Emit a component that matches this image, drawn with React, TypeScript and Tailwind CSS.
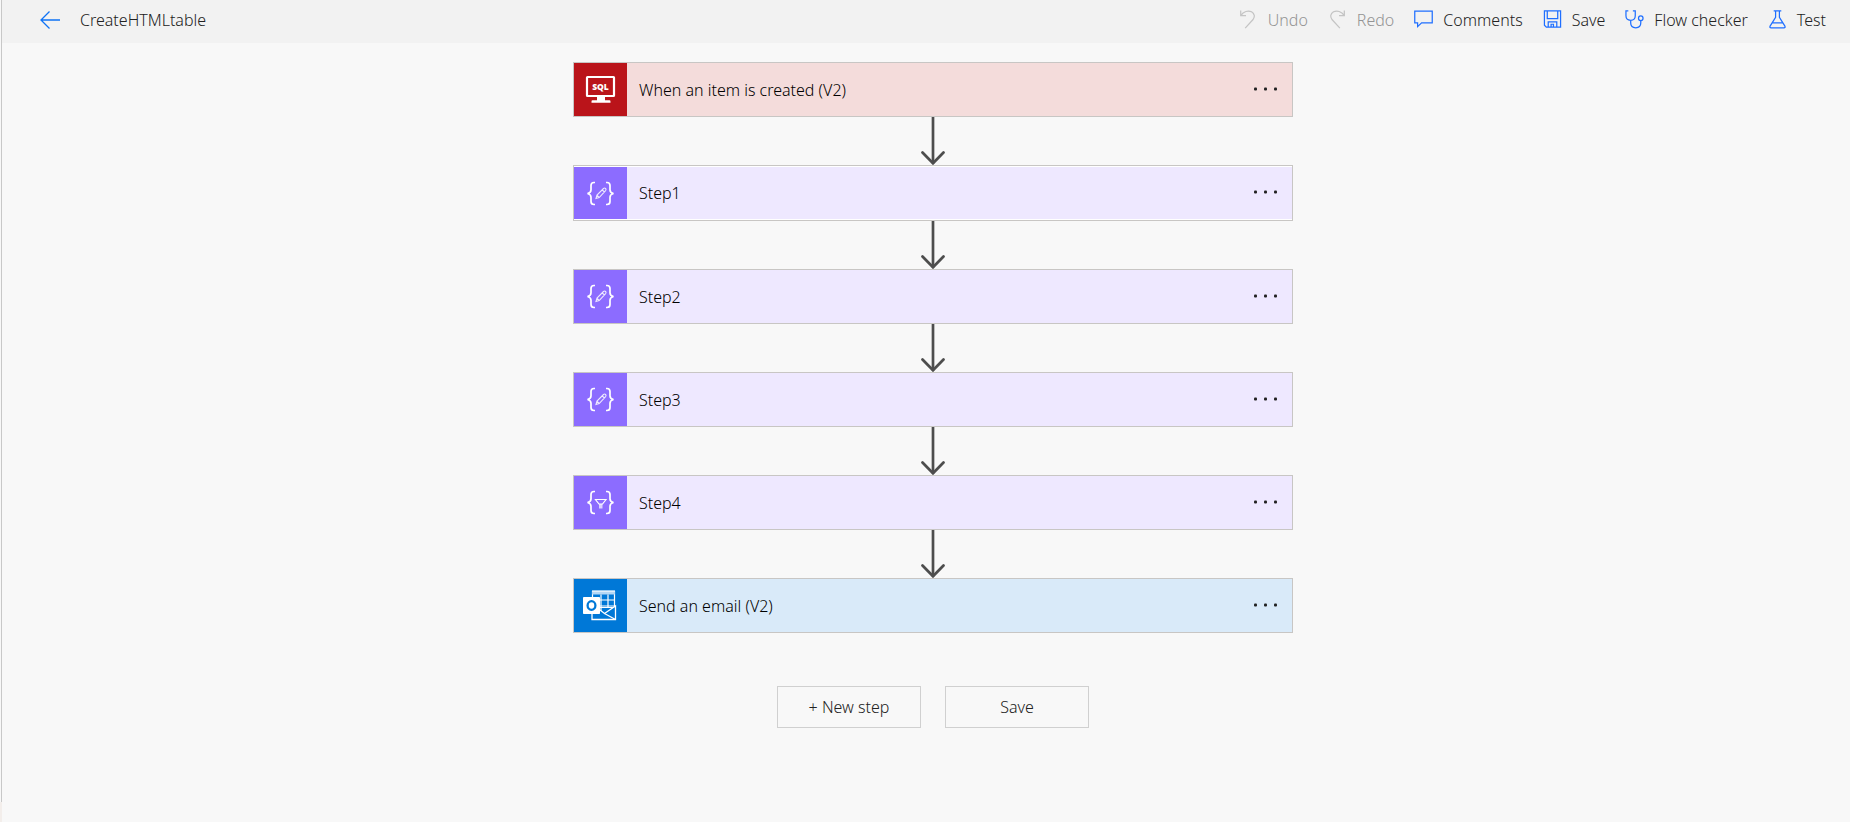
import type { ReactNode } from "react";

type StepKind = "sql" | "compose" | "filter" | "outlook";

type Step = {
  title: string;
  kind: StepKind;
  card: string;
  tile: string;
};

const steps: Step[] = [
  { title: "When an item is created (V2)", kind: "sql", card: "bg-[#f4dcdb] h-[55px]", tile: "bg-[#ba141a]" },
  { title: "Step1", kind: "compose", card: "bg-[#eee8ff] h-14 shadow-[inset_0_1px_0_#ffffff,inset_0_-1px_0_#ffffff] py-px", tile: "bg-[#8c6cff]" },
  { title: "Step2", kind: "compose", card: "bg-[#eee8ff] h-[55px]", tile: "bg-[#8c6cff]" },
  { title: "Step3", kind: "compose", card: "bg-[#eee8ff] h-[55px]", tile: "bg-[#8c6cff]" },
  { title: "Step4", kind: "filter", card: "bg-[#eee8ff] h-[55px]", tile: "bg-[#8c6cff]" },
  { title: "Send an email (V2)", kind: "outlook", card: "bg-[#d9eaf9] h-[55px]", tile: "bg-[#0078d7]" },
];

function SqlIcon() {
  return (
    <svg width="53" height="53" viewBox="0 0 53 53" fill="none" aria-hidden="true">
      <rect x="13" y="14" width="27" height="19" rx="0.5" stroke="#fff" strokeWidth="2.2" />
      <path d="M23 34h8v3.2h4.5q1 0 1 1.2v1.4h-19v-1.4q0-1.2 1-1.2H23z" fill="#fff" />
      <text x="26.5" y="27" textAnchor="middle" fill="#fff" fontSize="8.5" fontWeight="800" fontFamily="Open Sans, sans-serif">
        SQL
      </text>
    </svg>
  );
}

function Braces({ children }: { children: ReactNode }) {
  return (
    <svg width="53" height="53" viewBox="0 0 53 53" fill="none" stroke="#fff" strokeWidth="1.7" aria-hidden="true">
      <path d="M21 15.5h-1q-3 0-3 3v4.2q0 3-3.5 3.8q3.5.8 3.5 3.8v4.2q0 3 3 3h1" />
      <path d="M32 15.5h1q3 0 3 3v4.2q0 3 3.5 3.8q-3.5.8-3.5 3.8v4.2q0 3-3 3h-1" />
      {children}
    </svg>
  );
}

function OutlookIcon() {
  return (
    <svg width="53" height="53" viewBox="0 0 53 53" fill="none" aria-hidden="true">
      <path d="M18.5 12.5h22v16h-22z" stroke="#fff" strokeWidth="1.2" />
      <path d="M18 12h23v3.5H18z" fill="#b4d7f5" />
      <path d="M18 12h23" stroke="#fff" strokeWidth="1.2" />
      <path d="M27 15.5v17M34 15.5v13M19 21h22M19 27h22" stroke="#fff" strokeWidth="1.2" />
      <path d="M18 30.5v10h23.5V27L30.5 34.5L26 31" fill="#0078d7" stroke="#fff" strokeWidth="1.3" />
      <path d="M30.5 34.5L41.5 40.5" stroke="#fff" strokeWidth="1.3" />
      <rect x="9" y="18" width="17" height="17" rx="0.8" fill="#fff" />
      <ellipse cx="17.5" cy="26.5" rx="3.9" ry="4.3" stroke="#0078d7" strokeWidth="2.3" />
    </svg>
  );
}

function StepIcon({ kind }: { kind: StepKind }) {
  if (kind === "sql") return <SqlIcon />;
  if (kind === "outlook") return <OutlookIcon />;
  if (kind === "filter") {
    return (
      <Braces>
        <path d="M21.5 23.5h10.5l-3.5 4.5h-3.5z" strokeWidth="1.2" />
        <path d="M25 28h3.5v4.5h-3.5z" fill="#fff" fillOpacity="0.7" stroke="none" />
      </Braces>
    );
  }
  return (
    <Braces>
      <path
        d="M22 31.5l1-3.5 6.5-6.5q1.2-.9 2.1 0t0 2.1L25.2 30.5zM28.2 22.8l2.2 2.2M23 28l2.2 2.5"
        strokeWidth="1.1"
        strokeOpacity="0.85"
      />
    </Braces>
  );
}

function Arrow() {
  return (
    <svg className="mx-auto block" width="28" height="48" viewBox="0 0 28 48" fill="none" stroke="#4d4d4d" strokeWidth="2.7" aria-hidden="true">
      <path d="M14 0v46.5" />
      <path d="M3.5 35.5L14 46.3L24.5 35.5" strokeLinecap="round" />
    </svg>
  );
}

function ToolIcon({ children, muted = false }: { children: ReactNode; muted?: boolean }) {
  return (
    <svg
      className={muted ? "text-[#c4c4c4]" : "text-[#1f6fff]"}
      width="19"
      height="19"
      viewBox="0 0 20 20"
      fill="none"
      stroke="currentColor"
      strokeWidth="1.3"
      aria-hidden="true"
    >
      {children}
    </svg>
  );
}

const tools = [
  {
    label: "Undo",
    muted: true,
    icon: <path d="M1.8.5v5.4h5.6M2 5.7C4.7 1.5 9.5.1 13.2 1.9q4.9 3.3 1.6 8.1L6.5 19" />,
  },
  {
    label: "Redo",
    muted: true,
    icon: <path d="M17.2.5v5.4h-5.6M17 5.7C14.3 1.5 9.5.1 5.8 1.9q-4.9 3.3-1.6 8.1L12.5 19" />,
  },
  { label: "Comments", muted: false, icon: <path d="M.8 1.2h18.4v12.3H8L3.8 17.5v-4H.8z" /> },
  {
    label: "Save",
    muted: false,
    icon: <path d="M1.5 1h17v17H3.5l-2-2zM4.5 1v8h11v-8M5.5 18v-5.5h9v5.5M8.5 18v-3h2.5v3" />,
  },
  {
    label: "Flow checker",
    muted: false,
    icon: (
      <>
        <path d="M3.500.8h-2.500v5.300q0 4.700 4.900 4.700t4.900-4.700V.8H8.300M6 10.800v3q0 5 5.300 5t5.300-5v-2.700" />
        <circle cx="16.6" cy="8.7" r="2.4" />
      </>
    ),
  },
  { label: "Test", muted: false, icon: <path d="M6 .8h8M8 .8v7L2.2 17q-.7 1.700 1 1.700h13.600q1.700 0 1-1.700L12 7.800v-7M5 13.500h10" /> },
];

export default function App() {
  return (
    <div className="flex min-h-screen bg-[#f8f8f8] font-['Noto_Sans','Open_Sans',sans-serif] text-base font-light text-[#222222]">
      <div className="flex w-0.5 flex-col">
        <div className="flex-1 border-r border-[#c8c8c8]" />
        <div className="h-5 bg-[#f3eeeb]" />
      </div>
      <div className="min-w-0 flex-1">
        <header className="flex h-[43px] items-center justify-between bg-[#f2f2f2] pr-6 pb-1 pl-[38px]">
          <div className="flex items-center gap-5">
            <button type="button" aria-label="Back">
              <svg width="20" height="18" viewBox="0 0 20 18" fill="none" stroke="#0f73f5" strokeWidth="1.3" aria-hidden="true">
                <path d="M20 9H1M9.5.5L1 9l8.5 8.5" />
              </svg>
            </button>
            <h1 className="leading-6">CreateHTMLtable</h1>
          </div>
          <nav className="flex items-center gap-5">
            {tools.map((tool) => (
              <button
                key={tool.label}
                type="button"
                disabled={tool.muted}
                className={tool.muted ? "flex items-center gap-2.5 leading-6 text-[#949494]" : "flex items-center gap-2.5 leading-6"}
              >
                <ToolIcon muted={tool.muted}>{tool.icon}</ToolIcon>
                {tool.label}
              </button>
            ))}
          </nav>
        </header>
        <main className="flex flex-col items-center pt-[19px] pl-3.5">
          <ol className="w-full max-w-[720px]">
            {steps.map((step, i) => (
              <li key={step.title}>
                {i > 0 && <Arrow />}
                <div className={`flex items-center border border-[#c8c6c4] text-black ${step.card}`}>
                  <div className={`flex h-full w-[53px] items-center overflow-hidden ${step.tile}`}>
                    <StepIcon kind={step.kind} />
                  </div>
                  <span className="flex-1 pl-3 leading-6">{step.title}</span>
                  <button type="button" aria-label={`Menu for ${step.title}`} className="px-3.5 pt-1.5 pb-2">
                    <svg width="25" height="4" viewBox="0 0 25 4" fill="#222" aria-hidden="true">
                      <rect x="1" y="0.5" width="3" height="3" rx="1" />
                      <rect x="11" y="0.5" width="3" height="3" rx="1" />
                      <rect x="21" y="0.5" width="3" height="3" rx="1" />
                    </svg>
                  </button>
                </div>
              </li>
            ))}
          </ol>
          <div className="mt-[53px] flex gap-6">
            <button type="button" className="h-[42px] w-36 border border-[#d0d0d0]">
              + New step
            </button>
            <button type="button" className="h-[42px] w-36 border border-[#d0d0d0]">
              Save
            </button>
          </div>
        </main>
      </div>
    </div>
  );
}
